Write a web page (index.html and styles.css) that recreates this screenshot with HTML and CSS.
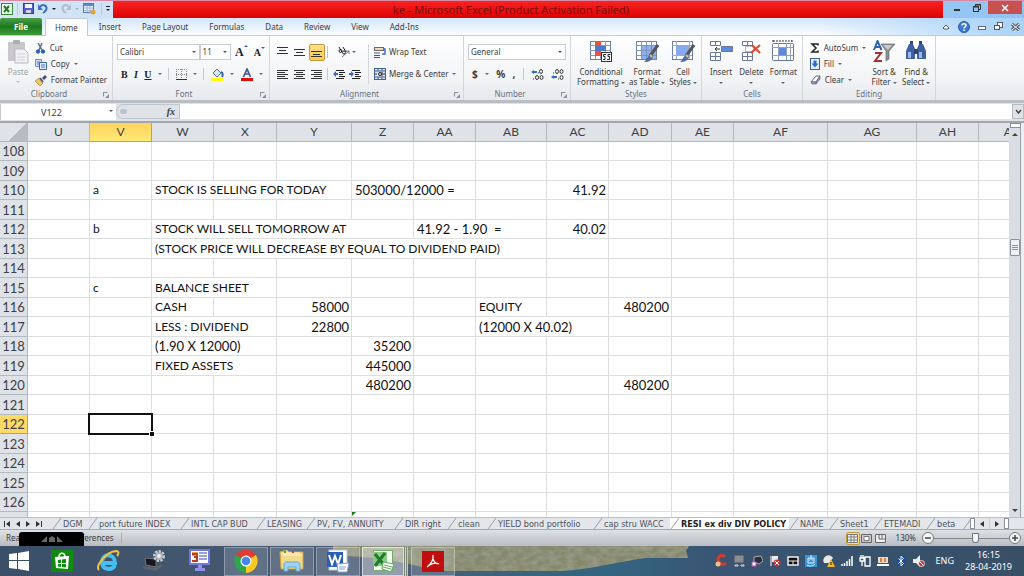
FILE: index.html
```html
<!DOCTYPE html>
<html lang="en">
<head>
    <meta charset="UTF-8">
    <meta name="viewport" content="width=device-width, initial-scale=1.0">
    <title>ke - Microsoft Excel</title>
    <link rel="stylesheet" href="styles.css">
</head>
<body>
    <header class="titlebar">
        <div class="quick">
            <svg width="12" height="12" viewBox="0 0 12 12"><rect x=".5" y=".5" width="11" height="11" fill="#eaf5e6" stroke="#3c8a3a"/><path d="M3 3l5 6M8 3L3 9" stroke="#1f7a2b" stroke-width="2"/></svg>
            <i class="vline"></i>
            <button aria-label="Save"><svg width="11" height="11" viewBox="0 0 11 11"><rect x=".5" y=".5" width="10" height="10" fill="#5a5fc8" stroke="#3a3f95"/><rect x="2" y="1" width="7" height="4" fill="#f4f6ff"/><rect x="3" y="7" width="5" height="3" fill="#cfd4f0"/></svg></button>
            <button aria-label="Undo"><svg width="10" height="11" viewBox="0 0 10 11"><path d="M2 4c3-4 8-1 6 3c-1 2-2 2-3 3" fill="none" stroke="#3d6fc4" stroke-width="2"/><path d="M0 1v6h5z" fill="#3d6fc4"/></svg></button>
            <i class="caret dark"></i>
            <button aria-label="Redo"><svg width="10" height="11" viewBox="0 0 10 11"><path d="M8 4c-3-4-8-1-6 3c1 2 2 2 3 3" fill="none" stroke="#b4bcc8" stroke-width="2"/><path d="M10 1v6h-5z" fill="#b4bcc8"/></svg></button>
            <i class="caret pale"></i>
            <button aria-label="Table"><svg width="13" height="12" viewBox="0 0 13 12"><rect x=".5" y=".5" width="10" height="9" fill="#f3f7fd" stroke="#5878b0"/><path d="M1 2h9" stroke="#5b8ad8" stroke-width="2"/><path d="M1 5h9M1 7.500h9M4 3v6M7 3v6" stroke="#9db3d6"/><circle cx="10" cy="9" r="2.500" fill="#e0a63c"/></svg></button>
            <i class="vline"></i>
            <button class="more" aria-label="Customize"><i class="caret dark"></i></button>
        </div>
        <h1 class="caption">ke - Microsoft Excel (Product Activation Failed)</h1>
        <div class="winbtns">
            <button aria-label="Minimize"><svg width="8" height="8" viewBox="0 0 8 8"><path d="M1 6h6" stroke="#333" stroke-width="2"/></svg></button>
            <button aria-label="Restore"><svg width="8" height="8" viewBox="0 0 8 8" fill="none" stroke="#333"><path d="M2.500 2V.5h5v5H6"/><rect x=".5" y="2.500" width="5" height="5"/><path d="M0 3h6M2 1h6"/></svg></button>
            <button class="close" aria-label="Close"><svg width="8" height="8" viewBox="0 0 8 8"><path d="M1 1l6 6M7 1L1 7" stroke="#fff" stroke-width="1.500"/></svg></button>
        </div>
    </header>

    <nav class="tabs">
        <button class="file">File</button>
        <button class="active">Home</button>
        <button>Insert</button>
        <button>Page Layout</button>
        <button>Formulas</button>
        <button>Data</button>
        <button>Review</button>
        <button>View</button>
        <button>Add-Ins</button>
        <div class="helpers">
            <svg width="8" height="6" viewBox="0 0 8 6"><path d="M1 4l3-3 3 3-1 1H2z" fill="#fff" stroke="#556"/></svg>
            <svg width="12" height="12" viewBox="0 0 12 12"><circle cx="6" cy="6" r="5.500" fill="#3f78cf" stroke="#2c5ca8"/><path d="M4 4.500c0-2.500 4-2.500 4 0c0 1.500-2 1.300-2 3M6 8.500v1.500" fill="none" stroke="#fff" stroke-width="1.500"/></svg>
            <svg width="8" height="8" viewBox="0 0 8 8"><rect x=".5" y="3.500" width="7" height="3" fill="#fff" stroke="#667"/></svg>
            <svg width="9" height="9" viewBox="0 0 9 9" fill="#fff" stroke="#556"><rect x="3.500" y=".5" width="5" height="5"/><rect x=".5" y="3.500" width="5" height="4"/></svg>
            <svg width="9" height="8" viewBox="0 0 9 8"><path d="M1 1l7 6M8 1L1 7" stroke="#556" stroke-width="3"/><path d="M1 1l7 6M8 1L1 7" stroke="#fff"/></svg>
        </div>
    </nav>

    <section class="ribbon">
        <div class="group clipboard">
            <div class="body">
                <button class="big off">
                    <svg width="22" height="24" viewBox="0 0 22 24"><rect x="1" y="2" width="17" height="19" rx="1" fill="#c9c7cc"/><rect x="6" y="0" width="7" height="4" rx="1" fill="#aeacb2"/><path d="M8 9h9l4 4v10H8z" fill="#f2f1f4" stroke="#bbb9c0"/><path d="M10 14h8M10 17h8M10 20h8" stroke="#d5d4da"/></svg>
                    <span>Paste</span><i class="caret"></i>
                </button>
                <div class="stack">
                    <button><svg width="11" height="11" viewBox="0 0 11 11"><path d="M3 0l4 7M7 0L4 7" stroke="#5f6f8c" stroke-width="1.500"/><circle cx="3" cy="8.500" r="1.700" fill="#2b5fb8" stroke="#2b5fb8"/><circle cx="8" cy="8.500" r="1.700" fill="#2b5fb8" stroke="#2b5fb8"/></svg>Cut</button>
                    <button><svg width="12" height="11" viewBox="0 0 12 11"><path d="M.5.5h6v7h-6z" fill="#cfdff7" stroke="#6d8fc9"/><path d="M2 3h3M2 5h2" stroke="#4d74b8"/><path d="M4.500 3.500h7v7h-7z" fill="#e4eefc" stroke="#3f68b0"/><path d="M6 6h4M6 8h4" stroke="#4d74b8"/></svg>Copy <i class="caret"></i></button>
                    <button><svg width="12" height="11" viewBox="0 0 12 11"><path d="M7 3l3-3 2 2-3 3z" fill="#4a4f6c"/><path d="M4 3l4 5-3 3L0 6z" fill="#efc661" stroke="#a9812c" stroke-width=".7"/><path d="M5 3l3 4" stroke="#5a5aa0" stroke-width="2"/></svg>Format Painter</button>
                </div>
            </div>
            <div class="name">Clipboard<i class="launch"></i></div>
        </div>

        <div class="group font">
            <div class="rows">
                <div class="row joined">
                    <div class="drop face"><select aria-label="Font"><option>Calibri</option></select></div>
                    <div class="drop size"><select aria-label="Font size"><option>11</option></select></div>
                    <button class="letter grow" aria-label="Grow font">A<sup class="up"></sup></button>
                    <button class="letter shrink" aria-label="Shrink font">A<sup class="down"></sup></button>
                </div>
                <div class="row styles-row">
                    <button class="letter">B</button>
                    <button class="letter italic">I</button>
                    <button class="letter under">U</button><i class="caret"></i>
                    <i class="vline"></i>
                    <button aria-label="Borders"><svg width="11" height="11" viewBox="0 0 11 11"><path d="M.5 0v11M5.500 0v11M10.500 0v11M0 .5h11M0 5.500h11" stroke="#888" stroke-dasharray="1 1"/><path d="M0 10.500h11" stroke="#333"/></svg></button><i class="caret"></i>
                    <i class="vline"></i>
                    <button aria-label="Fill color"><svg width="13" height="13" viewBox="0 0 13 13"><path d="M2 5l4-4 4 4-4 4z" fill="#dbe6f7" stroke="#54719f"/><path d="M10 4c2 1 2 3 1 5" stroke="#2c66c4" stroke-width="2" fill="none"/><rect y="10" width="12" height="3" fill="#ff0"/></svg></button><i class="caret"></i>
                    <button aria-label="Font color"><svg width="12" height="13" viewBox="0 0 12 13"><path d="M2.500 9L6 1l3.500 8M4 6h4" fill="none" stroke="#3c5a96" stroke-width="1.700"/><rect y="10" width="12" height="3" fill="#e00b0b"/></svg></button><i class="caret"></i>
                </div>
            </div>
            <div class="name">Font<i class="launch"></i></div>
        </div>

        <div class="group align">
            <div class="rows two">
                <div class="left">
                    <button aria-label="Top align"><svg width="11" height="12" viewBox="0 0 11 12"><path d="M0 1.500h11M2 4.500h7M0 7.500h11" stroke="#333"/></svg></button>
                    <button aria-label="Middle align"><svg width="11" height="12" viewBox="0 0 11 12"><path d="M0 3.500h11M2 6.500h7M0 9.500h11" stroke="#333"/></svg></button>
                    <button class="on" aria-label="Bottom align"><svg width="11" height="12" viewBox="0 0 11 12"><path d="M0 5.500h11M2 8.500h7M0 10.500h11" stroke="#333"/></svg></button>
                    <i class="vline"></i>
                    <button class="wide" aria-label="Orientation"><svg width="12" height="12" viewBox="0 0 12 12"><path d="M4 11l7-6M11 5v3M11 5H8" stroke="#777" fill="none"/><circle cx="2.500" cy="5" r="1.500" fill="none" stroke="#222"/><circle cx="6" cy="6.500" r="1.500" fill="none" stroke="#222"/><path d="M1 1l3 5M5 1l3 5" stroke="#222"/></svg><i class="caret"></i></button>
                    <button aria-label="Align left"><svg width="11" height="10" viewBox="0 0 11 10"><path d="M0 1.500h11M0 3.500h8M0 5.500h11M0 7.500h8M0 9.500h11" stroke="#333"/></svg></button>
                    <button aria-label="Center"><svg width="11" height="10" viewBox="0 0 11 10"><path d="M0 1.500h11M2 3.500h7M0 5.500h11M2 7.500h7M0 9.500h11" stroke="#333"/></svg></button>
                    <button aria-label="Align right"><svg width="11" height="10" viewBox="0 0 11 10"><path d="M0 1.500h11M3 3.500h8M0 5.500h11M3 7.500h8M0 9.500h11" stroke="#333"/></svg></button>
                    <i class="vline"></i>
                    <div class="pair">
                        <button aria-label="Decrease indent"><svg width="12" height="11" viewBox="0 0 12 11"><path d="M3 1.500h8M6 3.500h6M6 5.500h4M6 7.500h6M3 9.500h8" stroke="#222"/><path d="M0 5l3-3v2h2v2H3v2z" fill="#2f6cd0"/></svg></button>
                        <button aria-label="Increase indent"><svg width="12" height="11" viewBox="0 0 12 11"><path d="M3 1.500h8M6 3.500h6M6 5.500h4M6 7.500h6M3 9.500h8" stroke="#222"/><path d="M5 5L2 2v2H0v2h2v2z" fill="#2f6cd0"/></svg></button>
                    </div>
                </div>
                <div class="right">
                    <button><svg width="12" height="12" viewBox="0 0 12 12"><rect x=".5" y="1.500" width="9" height="3" fill="#f4d9a8" stroke="#667"/><path d="M0 7h6M0 9.500h6M0 11.500h6" stroke="#556"/><path d="M9 3h2v5H8" fill="none" stroke="#3d6fc4" stroke-width="1.500"/></svg>Wrap Text</button>
                    <button><svg width="12" height="12" viewBox="0 0 12 12"><rect x=".5" y=".5" width="11" height="11" fill="#dde8f8" stroke="#44608f"/><path d="M0 3h12M0 9h12M4 0v3M8 0v3M4 9v3M8 9v3" stroke="#44608f"/><circle cx="6" cy="6" r="1.500" fill="none" stroke="#222"/><path d="M1 6h2M9 6h2M8 4v4" stroke="#222"/></svg>Merge &amp; Center <i class="caret"></i></button>
                </div>
            </div>
            <div class="name">Alignment<i class="launch"></i></div>
        </div>

        <div class="group number">
            <div class="rows">
                <div class="row"><div class="drop format"><select aria-label="Number format"><option>General</option></select></div></div>
                <div class="row num-row">
                    <button class="sign">$</button><i class="caret"></i>
                    <button class="sign">%</button>
                    <button class="sign">,</button>
                    <i class="vline"></i>
                    <button aria-label="Increase decimal"><svg width="13" height="11" viewBox="0 0 13 11"><path d="M0 3l3-2v1h3v2H3v1z" fill="#2f6cd0"/><ellipse cx="10" cy="2.500" rx="1.500" ry="2" fill="none" stroke="#333"/><ellipse cx="6" cy="8.500" rx="1.500" ry="2" fill="none" stroke="#333"/><ellipse cx="10.500" cy="8.500" rx="1.500" ry="2" fill="none" stroke="#333"/><path d="M2 10h1M7 4h1" stroke="#333"/></svg></button>
                    <button aria-label="Decrease decimal"><svg width="13" height="11" viewBox="0 0 13 11"><path d="M0 8l3-2v1h3v2H3v1z" fill="#2f6cd0"/><ellipse cx="6" cy="2.500" rx="1.500" ry="2" fill="none" stroke="#333"/><ellipse cx="10.500" cy="2.500" rx="1.500" ry="2" fill="none" stroke="#333"/><ellipse cx="10.500" cy="8.500" rx="1.500" ry="2" fill="none" stroke="#333"/><path d="M2 4h1M7 10h1" stroke="#333"/></svg></button>
                </div>
            </div>
            <div class="name">Number<i class="launch"></i></div>
        </div>

        <div class="group looks">
            <div class="body">
                <button class="big"><svg width="24" height="24" viewBox="0 0 24 24"><rect x="1.500" y="1.500" width="20" height="18" fill="#fff" stroke="#6c7fa5"/><path d="M1 5.500h20M1 10.500h20M1 15.500h20M6.500 1v18M11.500 1v18M16.500 1v18" stroke="#8698bb"/><path d="M6 1h6v5H6zM6 11h6v5H6z" fill="#e8553f"/><path d="M6 6h11v5H6z" fill="#4d78cf"/><rect x="12.500" y="12.500" width="10" height="9" fill="#fff" stroke="#333"/><path d="M17 14.500h-2.500v2H16v3h-2M21.500 14.500H19v2h1.500v3H18" fill="none" stroke="#222"/></svg><span>Conditional<br>Formatting <i class="caret"></i></span></button>
                <button class="big"><svg width="24" height="24" viewBox="0 0 24 24"><rect x="1.500" y="1.500" width="20" height="18" fill="#fff" stroke="#6c7fa5"/><rect x="6" y="6" width="15" height="13" fill="#8fb0ea"/><path d="M1 5.500h20M1 10.500h20M1 15.500h20M6.500 1v18M11.500 1v18M16.500 1v18" stroke="#7d93bf"/><path d="M23 5l-8 11" stroke="#555" stroke-width="3"/><path d="M16 14l2 2c0 4-4 6-9 6c3-2 3-6 7-8z" fill="#4a6da8"/><path d="M15 15l2 2" stroke="#e8bf6a" stroke-width="2"/></svg><span>Format<br>as Table <i class="caret"></i></span></button>
                <button class="big"><svg width="24" height="24" viewBox="0 0 24 24"><rect x="1.500" y="1.500" width="20" height="18" fill="#fff" stroke="#6c7fa5"/><path d="M1 5.500h20M1 15.500h20M5.500 1v18M18.500 1v18" stroke="#9aabcb"/><rect x="5" y="5" width="13" height="10" fill="#86aaeb"/><path d="M23 5l-8 11" stroke="#555" stroke-width="3"/><path d="M16 14l2 2c0 4-4 6-9 6c3-2 3-6 7-8z" fill="#4a6da8"/><path d="M15 15l2 2" stroke="#e8bf6a" stroke-width="2"/></svg><span>Cell<br>Styles <i class="caret"></i></span></button>
            </div>
            <div class="name">Styles</div>
        </div>

        <div class="group cells">
            <div class="body">
                <button class="big"><svg width="24" height="24" viewBox="0 0 24 24"><g fill="#fff" stroke="#66789c"><path d="M1.500 1.500h10v4h-10zM1.500 12.500h10v8h-10zM1 16.500h11M6.500 1v5M6.500 12v8"/><path d="M12.500 6.500h11v5h-11z" fill="#5b8be0"/></g><path d="M11 9H6M8 7L6 9l2 2" stroke="#333" fill="none"/></svg><span>Insert<br><i class="caret"></i></span></button>
                <button class="big"><svg width="24" height="24" viewBox="0 0 24 24"><g fill="#fff" stroke="#66789c"><path d="M3.500 1.500h10v4h-10zM3.500 12.500h10v8h-10zM3 16.500h11M8.500 1v5M8.500 12v8"/><path d="M6.500 6.500h8v5h-8z" stroke-dasharray="1 1"/></g><path d="M13 5l8 8M21 5l-9 8" stroke="#e2452f" stroke-width="2"/></svg><span>Delete<br><i class="caret"></i></span></button>
                <button class="big"><svg width="24" height="24" viewBox="0 0 24 24"><rect x="1.500" y="3.500" width="21" height="17" rx="1" fill="#fff" stroke="#66789c"/><path d="M1 7.500h21M1 15.500h21M7.500 3v17M15.500 3v17M19.500 3v17" stroke="#8fa0c0"/><rect x="8" y="8" width="7" height="7" fill="#5b8be0"/><path d="M2 1h19M2 0v3M21 0v3" stroke="#333" stroke-dasharray="2 1"/></svg><span>Format<br><i class="caret"></i></span></button>
            </div>
            <div class="name">Cells</div>
        </div>

        <div class="group editing">
            <div class="body">
                <div class="stack">
                    <button><svg width="10" height="10" viewBox="0 0 10 10"><path d="M8 2.500V1H2l4 4-4 4h6V7.500" fill="none" stroke="#222" stroke-width="1.500"/></svg>AutoSum <i class="caret"></i></button>
                    <button><svg width="10" height="12" viewBox="0 0 10 12"><rect x=".5" y=".5" width="9" height="11" fill="#e8f0fc" stroke="#3c5f9e"/><path d="M3.500 2.500h3v3h2L5 9.500 1.500 5.500h2z" fill="#2f6cd0"/></svg>Fill <i class="caret"></i></button>
                    <button><svg width="11" height="10" viewBox="0 0 11 10"><path d="M1 7l5-6h4L6 7z" fill="#fff" stroke="#667"/><path d="M1 7h5v2H2zM6 7l4-6v3L6 9z" fill="#8ea3d0" stroke="#667" stroke-width=".7"/></svg>Clear <i class="caret"></i></button>
                </div>
                <button class="big"><svg width="24" height="24" viewBox="0 0 24 24"><path d="M9 4h14l-6 7v8l-3 2V11z" fill="#8d9096" stroke="#696c72" stroke-width=".7"/><path d="M11 5h9l-4 5z" fill="#c9cbd0"/><path d="M2 10L5.500 1l4 9M3.500 7h5" stroke="#2f62b5" stroke-width="2" fill="none"/><path d="M3 13h6l-6 8h7" stroke="#a5302c" stroke-width="2" fill="none"/></svg><span>Sort &amp;<br>Filter <i class="caret"></i></span></button>
                <button class="big"><svg width="24" height="24" viewBox="0 0 24 24"><path d="M5 4h4l2 5v10H2v-8zM19 4h-4l-2 5v10h9v-8z" fill="#3f5f9f"/><path d="M6 1h3v3H6zM15 1h3v3h-3z" fill="#2d4677"/><path d="M10 9h4v5h-4z" fill="#2d4677"/><path d="M4 12h3v6H4zM15 12h3v6h-3z" fill="#9db9e8"/></svg><span>Find &amp;<br>Select <i class="caret"></i></span></button>
            </div>
            <div class="name">Editing</div>
        </div>
    </section>

    <section class="formulabar">
        <div class="namebox drop"><input type="text" value="V122" aria-label="Name box"></div>
        <div class="fx"><i class="knob"></i><button>fx</button></div>
        <input class="formula" type="text" aria-label="Formula">
        <button class="expand" aria-label="Expand formula bar"><svg width="7" height="5" viewBox="0 0 7 5"><path d="M1 1l2.500 3L6 1" fill="none" stroke="#444" stroke-width="1.500"/></svg></button>
    </section>

    <main class="sheet">
        <div class="gridwrap">
            <table class="grid">
                <colgroup id="cols"></colgroup>
                <thead><tr id="heads"></tr></thead>
                <tbody id="rows"></tbody>
            </table>
        </div>
        <div class="vscroll">
            <i class="split"></i>
            <i class="arrow-up"></i>
            <div class="lane"><i class="thumb"></i></div>
            <i class="arrow-down"></i>
        </div>
    </main>

    <nav class="sheettabs">
        <div class="steps">
            <svg width="6" height="6" viewBox="0 0 6 6"><path d="M0 0h1v6H0zM6 0v6L2 3z" fill="#333"/></svg>
            <svg width="4" height="6" viewBox="0 0 4 6"><path d="M4 0v6L0 3z" fill="#333"/></svg>
            <svg width="4" height="6" viewBox="0 0 4 6"><path d="M0 0v6l4-3z" fill="#333"/></svg>
            <svg width="6" height="6" viewBox="0 0 6 6"><path d="M5 0h1v6H5zM0 0v6l4-3z" fill="#333"/></svg>
        </div>
        <div class="names" id="names"></div>
        <div class="hscroll">
            <i class="box"></i>
            <svg width="4" height="6" viewBox="0 0 4 6"><path d="M4 0v6L0 3z" fill="#333"/></svg>
            <i class="vline"></i>
            <svg width="4" height="6" viewBox="0 0 4 6"><path d="M0 0v6l4-3z" fill="#333"/></svg>
            <i class="box"></i>
        </div>
    </nav>

    <footer class="status">
        <span>Ready</span>
        <span class="circ">Circular References</span>
        <div class="blob"><svg width="22" height="8" viewBox="0 0 22 8" fill="#666"><path d="M0 7l6-6v6zM8 3l3-2 3 2v4H8zM16 1l6 6h-6z"/></svg></div>
        <div class="views">
            <button class="on" aria-label="Normal"><svg width="11" height="9" viewBox="0 0 11 9"><path d="M.5.5h10v8H.5zM0 3h11M0 6h11M4 0v9M7 0v9" fill="#fff" stroke="#777"/></svg></button>
            <button aria-label="Page layout"><svg width="11" height="9" viewBox="0 0 11 9"><path d="M.5.5h10v8H.5z" fill="#ccc" stroke="#666"/><path d="M3 2.500h5v4H3z" fill="#fff" stroke="#777"/></svg></button>
            <button aria-label="Page break"><svg width="11" height="9" viewBox="0 0 11 9"><path d="M.5.5h10v8H.5z" fill="#eee" stroke="#666"/><path d="M4 0v5M7 0v5M4 5h6" stroke="#666"/></svg></button>
        </div>
        <label for="zoom">130%</label>
        <button class="round" aria-label="Zoom out"><svg width="6" height="6" viewBox="0 0 6 6"><path d="M0 3h6" stroke="#444" stroke-width="1.500"/></svg></button>
        <input id="zoom" type="range" min="0" max="100" value="56">
        <button class="round" aria-label="Zoom in"><svg width="6" height="6" viewBox="0 0 6 6"><path d="M0 3h6M3 0v6" stroke="#444" stroke-width="1.500"/></svg></button>
    </footer>

    <div class="taskbar">
        <svg class="wallpaper" viewBox="0 0 1024 30" preserveAspectRatio="none">
            <defs>
                <linearGradient id="sea"><stop offset="0" stop-color="#3a5068"/><stop offset=".4" stop-color="#4c5d75"/><stop offset=".5" stop-color="#39647f"/><stop offset=".6" stop-color="#336480"/><stop offset=".7" stop-color="#395573"/><stop offset="1" stop-color="#384f66"/></linearGradient>
                <filter id="sand" x="0" y="0" width="1" height="1"><feTurbulence type="fractalNoise" baseFrequency=".12 .2" numOctaves="3" seed="4"/><feColorMatrix values="0 0 0 0 .34  0 0 0 0 .36  0 0 0 0 .28  1.400 0 0 0 -.4"/><feComposite in2="SourceGraphic" operator="in" result="n"/><feMerge><feMergeNode in="SourceGraphic"/><feMergeNode in="n"/></feMerge></filter>
            </defs>
            <rect width="1024" height="30" fill="url(#sea)"/>
            <path d="M333 0H689l-3 5 2 7H645C620 15 590 24 560 25H450C410 22 400 10 333 10z" fill="#85876a" filter="url(#sand)"/>
        </svg>
        <div class="apps">
            <button class="pin start" aria-label="Start"><svg width="20" height="20" viewBox="0 0 20 20" fill="#fff"><path d="M0 3l8-1v7H0zM9 2l11-2v9H9zM0 10h8v8l-8-1zM9 10h11v10L9 18z"/></svg></button>
            <button class="pin" aria-label="Store"><svg width="22" height="22" viewBox="0 0 22 22"><rect width="22" height="22" fill="#118a11"/><path d="M4 7l14-1-1 13-12-1z" fill="#fff"/><path d="M8 7c0-5 6-5 6 0" fill="none" stroke="#fff" stroke-width="1.500"/><path d="M7 10l3-.5V13H7zM11 9.500l4-.5v4h-4zM7 14h3v3l-3-.5zM11 14h4v3.500l-4-.5z" fill="#118a11"/></svg></button>
            <button class="pin" aria-label="Internet Explorer"><svg width="24" height="24" viewBox="0 0 24 24"><path d="M19 16c-3 6-13 5-13-3c0-9 13-9 13 1H7" fill="none" stroke="#46bdf0" stroke-width="4"/><path d="M3 21C-1 17 10 3 20 2c4 0 2 4 1 5" fill="none" stroke="#f2c33a" stroke-width="2"/></svg></button>
            <button class="pin" aria-label="Device settings"><svg width="24" height="24" viewBox="0 0 24 24"><path d="M3 9l11 1v8L4 16z" fill="#15181d" stroke="#777"/><circle cx="17" cy="7" r="4" fill="none" stroke="#c9ced4" stroke-width="4" stroke-dasharray="2 1"/><circle cx="17" cy="7" r="3" fill="#eceef0" stroke="#aab1ba" stroke-width="2"/><path d="M1 17l12 2 6-4 1 2-6 5-13-3z" fill="#5d646d"/></svg></button>
            <button class="pin" aria-label="Presentation"><svg width="22" height="24" viewBox="0 0 22 24"><rect x="1" y="1" width="19" height="14" fill="#fff" stroke="#7478d8" stroke-width="2"/><path d="M3 3h6v4H3z" fill="#e8a33a"/><path d="M3 5h5v3H5h3v4H3" stroke="#c23a24" stroke-width="2" fill="none"/><path d="M10 4h8M10 7h8M10 10h8" stroke="#3946b8"/><path d="M9 16h4v3h3v3H6v-3h3z" fill="#8f92f0"/></svg></button>
            <button class="app" aria-label="Chrome"><svg width="24" height="24" viewBox="0 0 24 24"><path d="M12 12L2 6a12 12 0 0 1 20 0z" fill="#e33b2e"/><path d="M12 12L22 6a12 12 0 0 1-10 18z" fill="#fbc921"/><path d="M12 12v12A12 12 0 0 1 2 6z" fill="#2fa64c"/><circle cx="12" cy="12" r="5.500" fill="#fff"/><circle cx="12" cy="12" r="4.300" fill="#4387ec"/></svg></button>
            <button class="app" aria-label="File Explorer"><svg width="26" height="24" viewBox="0 0 26 24"><path d="M1 3l7-2 2 2h14v17H2z" fill="#f3d98b" stroke="#c9a548"/><path d="M4 4h17M4 6h19" stroke="#fff8dc"/><path d="M5 3h2" stroke="#3aa83a" stroke-width="2"/><path d="M13 3h2" stroke="#d33" stroke-width="2"/><path d="M5 22v-6c0-2 1-3 3-3h10c2 0 3 1 3 3v6h-4v-4H9v4z" fill="#9fd3f0" stroke="#5ca9d4"/></svg></button>
            <button class="app" aria-label="Word"><svg width="24" height="24" viewBox="0 0 24 24"><rect x="3" y="1" width="18" height="20" fill="#fff" stroke="#b8c9e6"/><path d="M1 3h16v15H1z" fill="#2a5fb5"/><path d="M3 6l3 9 3-8 3 8 3-9" fill="none" stroke="#fff" stroke-width="2"/><path d="M11 15l12-1-2 9H12z" fill="#fff" stroke="#7fa2d8"/><path d="M13 18h7M13 20h6" stroke="#7fa2d8"/></svg></button>
            <button class="app current" aria-label="Excel"><svg width="24" height="24" viewBox="0 0 24 24"><rect x="2.500" y="1.500" width="19" height="20" fill="#f4faf1" stroke="#6fae68"/><path d="M2 3h14v14H2z" fill="#8cc783"/><path d="M4 5l9 11M14 4L4 17" stroke="#1f7a2b" stroke-width="3"/><path d="M12 13l11 2-3 8-9-3z" fill="#fff" stroke="#5daa58"/><path d="M13 16l8 2M12 18l8 2" stroke="#5daa58"/></svg></button>
            <button class="app" aria-label="Adobe Reader"><svg width="22" height="21" viewBox="0 0 22 21"><rect width="22" height="21" fill="#c00d0d"/><path d="M5 16c4-3 7-8 6-12c-1 5 2 9 6 9c-4-2-9 0-12 3" fill="none" stroke="#fff" stroke-width="1.200"/></svg></button>
        </div>
        <div class="tray">
            <svg width="12" height="14" viewBox="0 0 12 14"><path d="M10 3C6-1 1 4 4 8s6 2 7 1" fill="none" stroke="#d8392b" stroke-width="3"/><circle cx="3" cy="10" r="2.500" fill="#f0c48a"/></svg>
            <svg width="12" height="14" viewBox="0 0 12 14"><path d="M1 1h10v8H1z" fill="#8a8e92" stroke="#4d5157"/><path d="M2 11h3v1H2zM8 11h3v1H8z" stroke="#ddd"/></svg>
            <svg width="12" height="14" viewBox="0 0 12 14"><path d="M3 3l7-1 2 5-4 3-5-2z" fill="#2b2f35" stroke="#a6abb2"/><path d="M1 8h4v4H1z" fill="#fff" stroke="#c14fb5"/></svg>
            <svg width="12" height="14" viewBox="0 0 12 14"><path d="M2 2v10" stroke="#fff"/><path d="M3 2h6v6H3z" fill="#e9ebee"/><circle cx="8" cy="9" r="3.500" fill="#d12f2f"/><path d="M6 7l4 4M10 7l-4 4" stroke="#fff"/></svg>
            <svg width="12" height="14" viewBox="0 0 12 14"><path d="M1 3h10v8H1z" fill="#111" stroke="#eee" stroke-width="1.500"/><path d="M1 7h10M6 7v4" stroke="#eee"/></svg>
            <svg width="12" height="14" viewBox="0 0 12 14"><path d="M0 1h12v12H0z" fill="#3794d6"/><path d="M3 4h6v5H3zM6 1v5M2 11c3 2 6 1 8-1M4 6h1M7 6h1" fill="none" stroke="#dff1ff"/></svg>
            <svg width="12" height="14" viewBox="0 0 12 14"><path d="M1 9a5 5 0 0 1 9-5l-4 5z" fill="#e8e8e8"/><path d="M8 5l4 8H4z" fill="#f5b921"/><path d="M8 8v3" stroke="#222"/></svg>
            <svg width="12" height="14" viewBox="0 0 12 14"><path d="M1 12v-2M3.500 12V9M6 12V7M8.500 12V5M11 12V2" stroke="#fff" stroke-width="1.500"/></svg>
            <svg width="12" height="14" viewBox="0 0 12 14"><path d="M6 3h5v9H6zM2 1v3M4 1v3M1 4h4v3H1zM3 7v5" fill="none" stroke="#fff" stroke-width="1.300"/></svg>
            <svg width="12" height="14" viewBox="0 0 12 14"><path d="M1 3h10v6H1z" fill="#e6dcd4"/><path d="M3 4h2v4H3zM7 4h2v4H7z" fill="#e0812a"/><path d="M0 11h12" stroke="#fff" stroke-width="2"/></svg>
            <svg width="12" height="14" viewBox="0 0 12 14"><ellipse cx="6" cy="7" rx="4.500" ry="6" fill="#1b4f9c"/><path d="M3.500 4.500l5 5L6 12V2l2.500 2.500-5 5" fill="none" stroke="#fff"/></svg>
            <svg width="12" height="14" viewBox="0 0 12 14"><path d="M0 5h3l4-4v12L3 9H0z" fill="#eee"/><circle cx="8.500" cy="9.500" r="3" fill="#d12f2f" stroke="#fff" stroke-width=".7"/><path d="M6.500 7.500l4 4" stroke="#fff"/></svg>
        </div>
        <span class="lang">ENG</span>
        <time class="clock">16:15<br>28-04-2019</time>
    </div>

    <script>
        const columns = {
            U: 62, V: 62, W: 62, X: 63, Y: 75, Z: 62, AA: 62, AB: 71,
            AC: 62, AD: 63, AE: 62, AF: 94, AG: 89, AH: 62, AI: 62
        };

        // row -> column -> [value, columns it runs over]
        const data = {
            110: { V: ["a", 1], W: ["STOCK IS SELLING FOR TODAY", 3], Z: ["503000/12000 =", 2], AC: [41.92, 1] },
            112: { V: ["b", 1], W: ["STOCK WILL SELL TOMORROW AT", 4], AA: ["41.92 - 1.90  =", 2], AC: [40.02, 1] },
            113: { W: ["(STOCK PRICE WILL DECREASE BY EQUAL TO DIVIDEND PAID)", 6] },
            115: { V: ["c", 1], W: ["BALANCE SHEET", 2] },
            116: { W: ["CASH", 1], Y: [58000, 1], AB: ["EQUITY", 1], AD: [480200, 1] },
            117: { W: ["LESS : DIVIDEND", 2], Y: [22800, 1], AB: ["(12000 X 40.02)", 2] },
            118: { W: ["(1.90 X 12000)", 2], Z: [35200, 1] },
            119: { W: ["FIXED ASSETS", 2], Z: [445000, 1] },
            120: { Z: [480200, 1], AD: [480200, 1] }
        };

        const sheets = [
            ["DGM", 36], ["port future INDEX", 92], ["INTL CAP BUD", 76], ["LEASING", 50],
            ["PV, FV, ANNUITY", 88], ["DIR right", 53], ["clean", 40], ["YIELD bond portfolio", 106],
            ["cap stru WACC", 77], ["RESI ex div DIV POLICY", 119], ["NAME", 40], ["Sheet1", 44],
            ["ETEMADI", 53], ["beta", 36]
        ];

        const letters = Object.keys(columns);
        const slash = '<svg width="10" height="13" viewBox="0 0 10 13"><path d="M1 12L9 1" stroke="#9aa0a8"/></svg>';

        let cols = '<col style="width:28px">';
        let heads = '<th class="corner"></th>';
        letters.forEach(function (c) {
            cols += `<col style="width:${columns[c]}px">`;
            heads += `<th class="${c === "V" ? "picked" : ""}">${c}</th>`;
        });
        document.getElementById("cols").innerHTML = cols;
        document.getElementById("heads").innerHTML = heads;

        function kindOf(value) {
            if (typeof value === "number") return "num";
            return /[0-9]/.test(value) ? "" : "words";
        }

        let html = "";
        for (let r = 108; r <= 127; r++) {
            const line = data[r] || {};
            html += `<tr><th class="${r === 122 ? "picked" : ""}">${r < 127 ? r : ""}</th>`;
            for (let i = 0; i < letters.length; i++) {
                const cell = line[letters[i]];
                if (cell) {
                    html += `<td class="${kindOf(cell[0])}" colspan="${cell[1]}">${cell[0]}</td>`;
                    i += cell[1] - 1;
                } else if (r === 122 && letters[i] === "V") {
                    html += '<td class="cursor"></td>';
                } else if (r === 127 && letters[i] === "Z") {
                    html += '<td class="flag"></td>';
                } else {
                    html += "<td></td>";
                }
            }
            html += "</tr>";
        }
        document.getElementById("rows").innerHTML = html;

        document.getElementById("names").innerHTML = sheets.map(function (s) {
            const on = s[0].startsWith("RESI") ? "active" : "";
            return `<button class="${on}" style="width:${s[1]}px">${slash}${s[0]}</button>`;
        }).join("") + slash;
    </script>
</body>
</html>
```

FILE: styles.css
```css
* {
    box-sizing: border-box;
}

body {
    margin: 0;
    height: 100vh;
    display: flex;
    flex-direction: column;
    overflow: hidden;
    font-family: "Noto Sans", sans-serif;
    font-size: 8px;
    line-height: 10px;
    color: #3b3b3b;
    background: #fff;
}

button, input, select {
    font: inherit;
    color: inherit;
    border: none;
    background: none;
    padding: 0;
    margin: 0;
    border-radius: 0;
}

button {
    display: flex;
    align-items: center;
    justify-content: center;
    white-space: nowrap;
}

svg {
    display: block;
    flex: none;
}

.caret {
    display: inline-block;
    flex: none;
    border: 2px solid transparent;
    border-top-color: #666;
    border-bottom: none;
    vertical-align: middle;
}

.caret.dark {
    border-top-color: #222;
}

.caret.pale {
    border-top-color: #aab2bd;
}

.vline {
    width: 1px;
    height: 12px;
    flex: none;
    background: #c3c9d1;
}

/* title bar */
.titlebar {
    display: flex;
    height: 18px;
    flex: none;
    background: linear-gradient(to right, #d5e6f7, #b5d3f2 60%, #90c3f3);
    border-top: 1px solid #d98aa5;
}

.quick {
    width: 113px;
    flex: none;
    display: flex;
    align-items: center;
    justify-content: space-between;
    padding: 0 3px 2px 1px;
}

.more {
    border-top: 1px solid #222;
    padding-top: 2px;
}

.caption {
    flex: 1;
    margin: 0;
    padding-right: 34px;
    font-size: 11px;
    line-height: 17px;
    font-weight: normal;
    text-align: center;
    color: #7c0d0d;
    background: linear-gradient(#fb2222, #d90202);
}

.winbtns {
    flex: none;
    width: 81px;
    display: flex;
    padding-left: 4px;
}

.winbtns button {
    width: 20px;
    height: 13px;
}

.winbtns .close {
    width: 34px;
    margin-left: auto;
    margin-right: 2px;
    background: #c75050;
}

/* ribbon tabs */
.tabs {
    display: flex;
    gap: 1px;
    height: 18px;
    flex: none;
    background: linear-gradient(90deg, transparent 80%, #a8d2f8), linear-gradient(#d3e6fa, #fbfdff);
    border-bottom: 1px solid #c3cad3;
}

.tabs button {
    padding: 0 10px;
}

.tabs .file {
    width: 42px;
    margin-right: 2px;
    color: #fff;
    font-weight: bold;
    background: linear-gradient(#4c9d49, #1c7a1e 50%, #3f9a35);
    border-radius: 2px 2px 0 0;
}

.tabs .active {
    padding: 0 9px;
    height: 18px;
    background: #fff;
    border: 1px solid #c3cad3;
    border-bottom: none;
    border-radius: 2px 2px 0 0;
}

.helpers {
    margin-left: auto;
    display: flex;
    align-items: center;
    gap: 8px;
    padding-right: 4px;
}

/* ribbon */
.ribbon {
    display: flex;
    height: 67px;
    flex: none;
    background: linear-gradient(#fff, #f4f5f7 60%, #e6e9ed);
    border-bottom: 3px solid #b9bec5;
}

.group {
    flex: none;
    display: flex;
    flex-direction: column;
    border-right: 1px solid #d3d7dc;
}

.clipboard { width: 113px; }
.font { width: 157px; }
.align { width: 194px; }
.number { width: 107px; }
.looks { width: 131px; }
.cells { width: 101px; }
.editing { width: 133px; }

.body {
    flex: 1;
    display: flex;
    justify-content: space-around;
    padding: 4px 2px 0 4px;
}

.name {
    display: flex;
    height: 12px;
    align-items: center;
    justify-content: center;
    color: #6a7280;
    position: relative;
}

.clipboard .name, .font .name, .align .name, .number .name {
    padding-right: 14px;
}

.launch {
    position: absolute;
    right: 4px;
    bottom: 3px;
    width: 5px;
    height: 5px;
    border: 1px solid #8a919c;
    border-right-color: transparent;
    border-bottom-color: transparent;
}

.launch::after {
    content: "";
    position: absolute;
    left: 1px;
    top: 1px;
    border: 2px solid transparent;
    border-right-color: #8a919c;
    border-bottom-color: #8a919c;
}

.big {
    flex-direction: column;
    justify-content: flex-start;
    text-align: center;
}

.big svg {
    margin-bottom: 3px;
}

.big.off {
    color: #a3a3a3;
}

.big.off .caret {
    margin-top: 4px;
    border-top-color: #bbb;
}

.stack {
    display: flex;
    flex-direction: column;
    align-items: flex-start;
}

.stack button {
    height: 16px;
    gap: 4px;
}

.rows {
    flex: 1;
    display: flex;
    flex-direction: column;
    gap: 6px;
    padding: 8px 4px 0;
}

.row {
    display: flex;
    align-items: center;
    justify-content: space-between;
    height: 16px;
}

.joined {
    justify-content: flex-start;
}

.drop {
    position: relative;
    height: 16px;
    border: 1px solid #c8ccd2;
    background: #fff;
}

.drop select, .drop input {
    width: 100%;
    height: 100%;
    padding-left: 2px;
    appearance: none;
}

.drop::after {
    content: "";
    position: absolute;
    right: 3px;
    top: 6px;
    border: 2px solid transparent;
    border-top-color: #555;
    border-bottom: none;
}

.face { width: 84px; }
.size { width: 32px; }
.format { width: 101px; }

.letter {
    font: bold 10px "Liberation Serif", serif;
    color: #222;
}

.grow {
    font-size: 12px;
    margin-left: 4px;
}

.shrink {
    margin-left: 6px;
}

.up, .down {
    align-self: flex-start;
    border: 2px solid transparent;
}

.up {
    border-bottom-color: #2f62b5;
    border-top: none;
}

.down {
    border-top-color: #2f62b5;
    border-bottom: none;
}

.italic {
    font-style: italic;
}

.under {
    text-decoration: underline;
}

.styles-row {
    padding: 0 2px 0 4px;
}

.two {
    flex-direction: row;
    gap: 4px;
}

.left {
    display: grid;
    grid-template-columns: 17px 17px 17px 5px 34px;
    grid-auto-rows: 16px;
    row-gap: 6px;
    align-items: center;
    justify-items: center;
}

.left .on {
    width: 16px;
    height: 17px;
    background: linear-gradient(#fde08a, #fbc94b);
    border: 1px solid #c29a3e;
    border-radius: 2px;
}

.wide {
    gap: 2px;
}

.pair {
    display: flex;
    gap: 4px;
}

.right {
    display: flex;
    flex-direction: column;
    align-items: flex-start;
    gap: 6px;
    border-left: 1px solid #d3d7dc;
    padding-left: 5px;
    margin-bottom: 4px;
}

.right button {
    height: 16px;
    gap: 3px;
}

.num-row {
    padding: 0 2px 0 4px;
}

.sign {
    font-size: 10px;
    font-weight: bold;
}

/* formula bar */
.formulabar {
    display: flex;
    height: 20px;
    flex: none;
    padding: 1px 0 2px;
    background: #dfe3e8;
    border-bottom: 2px solid #a1a6ae;
}

.namebox {
    width: 116px;
    border-width: 0 0 0 1px;
}

.namebox input {
    padding-right: 16px;
    text-align: center;
    font-size: 9px;
}

.fx {
    width: 64px;
    display: flex;
    align-items: center;
    justify-content: space-between;
    padding: 0 4px 0 3px;
    border: 1px solid #bfc5cc;
    border-radius: 8px 0 0 8px;
}

.fx button {
    font: italic bold 10px "Liberation Serif", serif;
}

.knob {
    width: 7px;
    height: 5px;
    border-radius: 3px;
    background: #bcc2ca;
}

.formula {
    flex: 1;
    min-width: 0;
    background: #fff;
}

.expand {
    width: 12px;
    border: 1px solid #b4bac2;
}

/* worksheet */
.sheet {
    flex: 1;
    min-height: 0;
    display: flex;
}

.gridwrap {
    flex: 1;
    min-width: 0;
    overflow: hidden;
}

.grid {
    width: max-content;
    table-layout: fixed;
    border-spacing: 0;
    font-family: Lato, sans-serif;
    font-size: 13px;
    line-height: 16px;
    color: #111;
}

.grid tr {
    height: 20px;
}

.grid thead tr, .grid tbody tr:nth-child(odd) {
    height: 19px;
}

.grid th {
    padding: 0;
    font-weight: normal;
    color: #3c4147;
    background: #dfe3e8;
    border-right: 1px solid #b3b9c1;
    border-bottom: 1px solid #b3b9c1;
}

.grid thead th {
    font-size: 12px;
}

.grid thead .picked {
    background: linear-gradient(#ffd35c, #ffe977);
    border-color: #c9a04a;
}

.grid tbody .picked {
    background: #ffd966;
    border-color: #c9a04a;
}

.grid .corner {
    background: linear-gradient(135deg, #dfe3e8 60%, #b7bcc3 60%);
}

.grid td {
    padding: 0 2px 0 3px;
    white-space: pre;
    border-right: 1px solid #dcdee0;
    border-bottom: 1px solid #dcdee0;
}

.grid .num {
    text-align: right;
}

.grid .words {
    font-size: 12px;
}

.cursor, .flag {
    position: relative;
}

.cursor::before {
    content: "";
    position: absolute;
    inset: -2px;
    border: 2px solid #111;
}

.cursor::after {
    content: "";
    position: absolute;
    right: -3px;
    bottom: -3px;
    width: 4px;
    height: 4px;
    background: #111;
    border: 1px solid #fff;
    border-width: 1px 0 0 1px;
}

.flag::before {
    content: "";
    position: absolute;
    left: 0;
    top: 0;
    border: 2px solid #1a7a1a;
    border-right-color: transparent;
    border-bottom-color: transparent;
}

.vscroll {
    width: 15px;
    flex: none;
    display: flex;
    flex-direction: column;
    align-items: center;
    background: #d9dee5;
    border-right: 3px solid #eceff2;
    box-shadow: inset -1px 0 #9aa0a9;
}

.split {
    width: 11px;
    height: 5px;
    background: #fff;
    border: 1px solid #8b919a;
}

.arrow-up, .arrow-down {
    margin: 5px 0;
    border: 3px solid transparent;
}

.arrow-up {
    border-bottom-color: #444;
    border-top: none;
}

.arrow-down {
    border-top-color: #444;
    border-bottom: none;
}

.lane {
    flex: 1;
    padding-top: 98px;
}

.thumb {
    display: block;
    width: 10px;
    height: 17px;
    border: 1px solid #8b919a;
    border-radius: 1px;
    background: repeating-linear-gradient(#8b919a 0 1px, transparent 1px 2px) center / 6px 5px no-repeat, #f0f2f5;
}

/* sheet tabs */
.sheettabs {
    display: flex;
    height: 13px;
    flex: none;
    align-items: stretch;
    background: #e3e7eb;
    border-top: 1px solid #b9bfc6;
    border-bottom: 1px solid #a4aab2;
    font-family: "DejaVu Sans Condensed", "DejaVu Sans", sans-serif;
    font-size: 9px;
}

.steps {
    width: 52px;
    flex: none;
    display: flex;
    align-items: center;
    justify-content: space-between;
    padding: 0 10px 0 4px;
}

.names {
    flex: 1;
    min-width: 0;
    display: flex;
    overflow: hidden;
}

.names button {
    flex: none;
    gap: 1px;
    justify-content: flex-start;
    color: #4d535b;
}

.names .active {
    background: #fff;
    color: #222;
    font-weight: bold;
}

.hscroll {
    width: 54px;
    flex: none;
    display: flex;
    align-items: center;
    justify-content: space-between;
    padding-right: 15px;
}

.box {
    width: 5px;
    height: 11px;
    background: #fff;
    border: 1px solid #8b919a;
}

/* status bar */
.status {
    position: relative;
    display: flex;
    align-items: center;
    height: 16px;
    flex: none;
    padding: 0 3px 0 6px;
    background: linear-gradient(#dde0e4, #b9bdc3);
}

.circ {
    margin-left: 12px;
    padding-right: 7px;
    border-right: 1px solid #a9aeb5;
}

.blob {
    position: absolute;
    left: 19px;
    bottom: 0;
    width: 65px;
    height: 14px;
    display: flex;
    align-items: center;
    justify-content: center;
    background: #000;
    border-radius: 3px 3px 0 0;
}

.views {
    margin-left: auto;
    display: flex;
    margin-right: 8px;
}

.views button {
    width: 14px;
    height: 13px;
}

.views .on {
    background: #fbdc7e;
    border: 1px solid #c29a3e;
    border-radius: 2px;
}

.round {
    width: 12px;
    height: 12px;
    border: 1px solid #777;
    border-radius: 50%;
    background: #f5f6f7;
}

.status label {
    margin-right: 6px;
}

#zoom {
    width: 75px;
    height: 12px;
    appearance: none;
    background: linear-gradient(#888, #888) center / 100% 1px no-repeat;
}

#zoom::-webkit-slider-thumb {
    appearance: none;
    width: 7px;
    height: 10px;
    background: #f5f6f7;
    border: 1px solid #777;
    border-radius: 1px 1px 4px 4px;
}

/* taskbar */
.taskbar {
    position: relative;
    display: flex;
    align-items: center;
    height: 30px;
    flex: none;
    color: #fff;
    background: #384f66;
}

.wallpaper {
    position: absolute;
    inset: 0;
    width: 100%;
    height: 100%;
}

.apps {
    position: relative;
    display: flex;
    align-items: center;
    gap: 2px;
}

.pin {
    width: 44px;
    height: 30px;
}

.start {
    width: 38px;
}

.app {
    width: 44px;
    height: 29px;
    background: rgba(255, 255, 255, .15);
    border: 1px solid rgba(255, 255, 255, .3);
}

.app.current {
    width: 42px;
    margin-right: 5px;
    background: rgba(255, 255, 255, .4);
    border-color: rgba(255, 255, 255, .6);
    box-shadow: 1px 0 #7b8477, 2px 0 #d5d8d2, 3px 0 #7b8477, 4px 0 #c4c8c0;
}

.tray {
    position: relative;
    margin-left: auto;
    display: flex;
    gap: 6px;
}

.lang {
    position: relative;
    margin: 0 11px;
    font-size: 9px;
}

.clock {
    position: relative;
    margin-right: 12px;
    font-size: 9px;
    line-height: 12px;
    text-align: center;
}
```
